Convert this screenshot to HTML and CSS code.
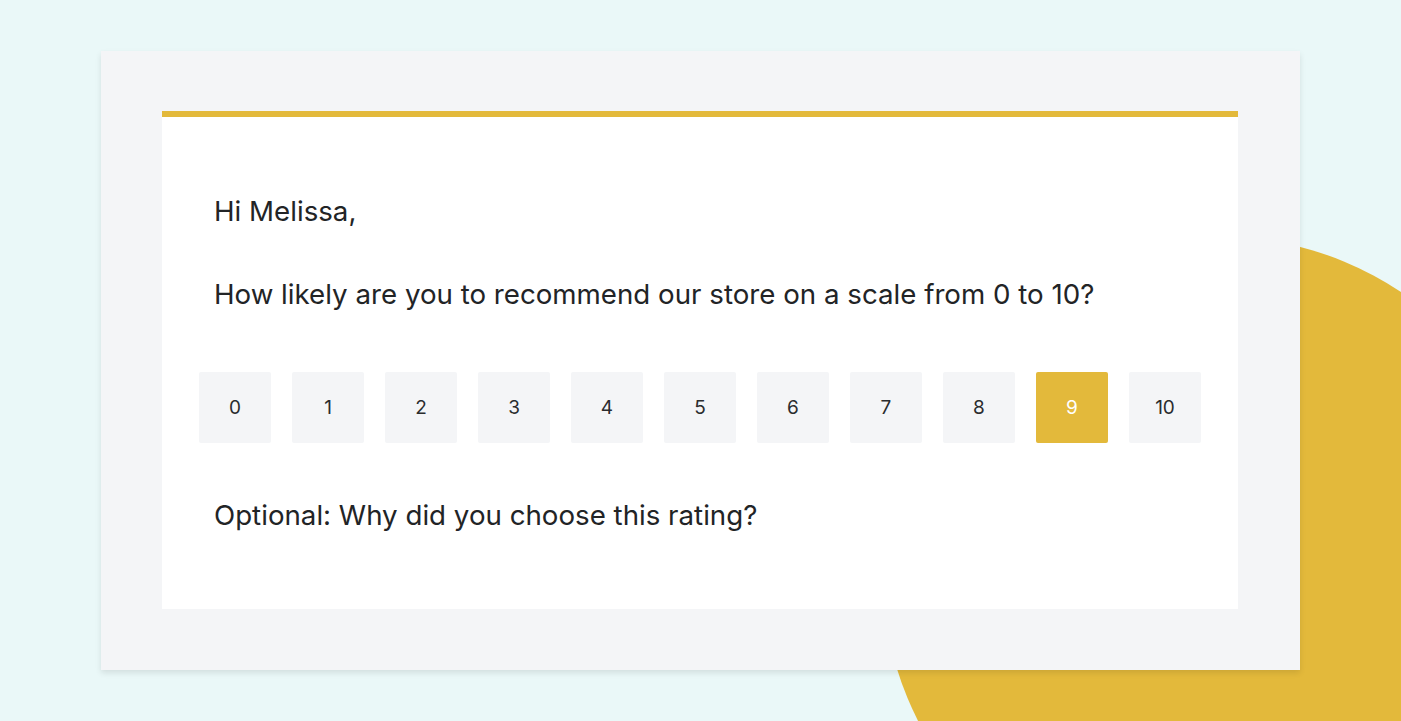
FILE: index.html
```html
<!DOCTYPE html>
<html>
<head>
<meta charset="utf-8">
<link rel="stylesheet" href="styles.css">
</head>
<body>
<div class="stage">
  <div class="blob"></div>
  <div class="card">
    <div class="panel">
      <p class="line greet">Hi Melissa,</p>
      <p class="line question">How likely are you to recommend our store on a scale from 0 to 10?</p>
      <div class="scale">
        <div class="btn">0</div>
        <div class="btn">1</div>
        <div class="btn">2</div>
        <div class="btn">3</div>
        <div class="btn">4</div>
        <div class="btn">5</div>
        <div class="btn">6</div>
        <div class="btn">7</div>
        <div class="btn">8</div>
        <div class="btn selected">9</div>
        <div class="btn">10</div>
      </div>
      <p class="line optional">Optional: Why did you choose this rating?</p>
    </div>
  </div>
</div>
</body>
</html>
```
FILE: styles.css
```css
html, body {
  margin: 0;
  padding: 0;
  overflow: hidden;
}
body {
  background: #eaf8f8;
  font-family: Inter, "Liberation Sans", sans-serif;
}
.stage {
  position: relative;
  width: 1401px;
  height: 721px;
  overflow: hidden;
  padding-top: 51px;
  box-sizing: border-box;
}
.blob {
  position: absolute;
  left: 882px;
  top: 236px;
  width: 668px;
  height: 668px;
  border-radius: 50%;
  background: #e3b93b;
}
.card {
  position: relative;
  margin-left: 101px;
  width: 1199px;
  height: 619px;
  box-sizing: border-box;
  padding: 60px 62px 61px 61px;
  background: #f4f5f7;
  box-shadow: 0 3px 6px rgba(0, 0, 0, 0.10);
}
.panel {
  height: 100%;
  box-sizing: border-box;
  background: #ffffff;
  border-top: 6px solid #e3b93b;
  padding: 78px 37px 0 37px;
  display: flex;
  flex-direction: column;
}
.line {
  margin: 0 0 0 15px;
  font-size: 27.7px;
  line-height: 32px;
  color: #222426;
}
.question {
  margin-top: 51px;
}
.scale {
  margin-top: 62px;
  display: flex;
  gap: 21px;
}
.btn {
  flex: 0 0 72px;
  height: 71px;
  border-radius: 2px;
  background: #f4f5f7;
  display: flex;
  align-items: center;
  justify-content: center;
  font-size: 19px;
  color: #2a2c2e;
}
.btn.selected {
  background: #e3b93b;
  color: #ffffff;
}
.optional {
  margin-top: 56px;
}
```
